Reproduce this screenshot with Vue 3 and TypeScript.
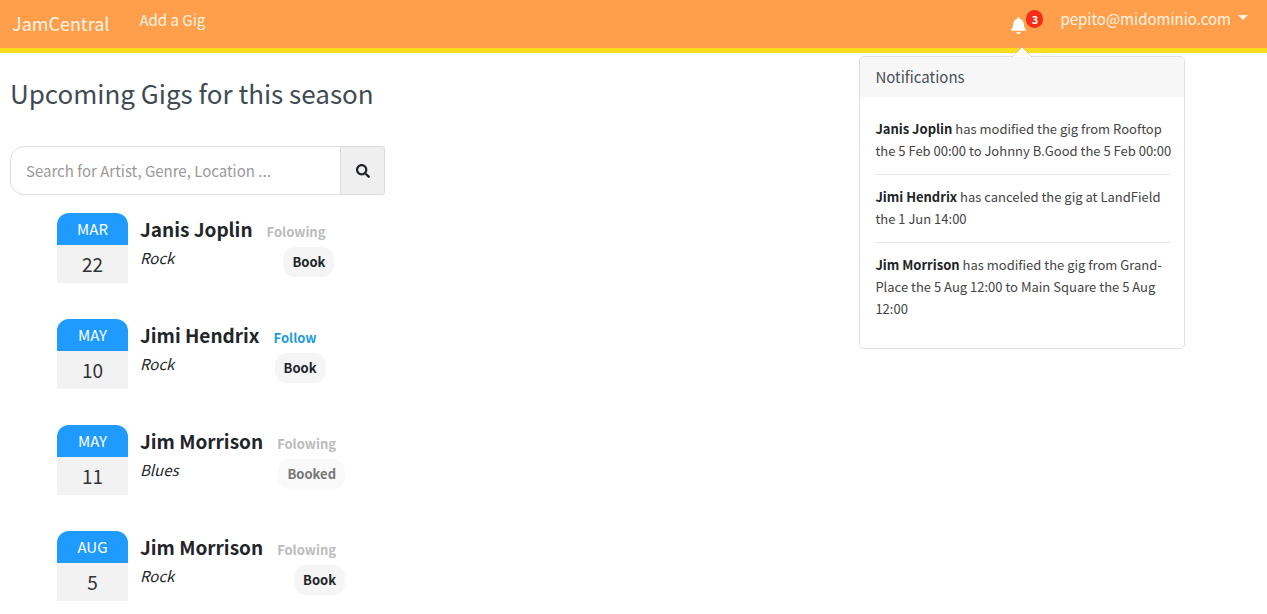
<script setup lang="ts">
import { ref } from 'vue'

interface Gig {
  id: number
  month: string
  day: number
  artist: string
  genre: string
  following: boolean
  booked: boolean
}

interface Notice {
  id: number
  artist: string
  message: string
}

const query = ref('')

const gigs = ref<Gig[]>([
  { id: 1, month: 'MAR', day: 22, artist: 'Janis Joplin', genre: 'Rock', following: true, booked: false },
  { id: 2, month: 'MAY', day: 10, artist: 'Jimi Hendrix', genre: 'Rock', following: false, booked: false },
  { id: 3, month: 'MAY', day: 11, artist: 'Jim Morrison', genre: 'Blues', following: true, booked: true },
  { id: 4, month: 'AUG', day: 5, artist: 'Jim Morrison', genre: 'Rock', following: true, booked: false },
])

const notices: Notice[] = [
  { id: 1, artist: 'Janis Joplin', message: 'has modified the gig from Rooftop the 5 Feb 00:00 to Johnny B.Good the 5 Feb 00:00' },
  { id: 2, artist: 'Jimi Hendrix', message: 'has canceled the gig at LandField the 1 Jun 14:00' },
  { id: 3, artist: 'Jim Morrison', message: 'has modified the gig from Grand-Place the 5 Aug 12:00 to Main Square the 5 Aug 12:00' },
]

const open = ref(true)
</script>

<template>
  <div class="page">
    <header class="navbar">
      <a class="brand" href="#">JamCentral</a>
      <nav class="links"><a class="link" href="#">Add a Gig</a></nav>
      <div class="alerts">
        <button class="bell" type="button" aria-label="Notifications" :aria-expanded="open" @click="open = !open">
          <svg class="bell-icon" viewBox="0 0 448 512" aria-hidden="true">
            <path fill="currentColor" d="M224 512c35.320 0 63.970-28.650 63.970-64H160.030c0 35.350 28.650 64 63.970 64zm215.390-149.710c-19.320-20.760-55.470-51.990-55.470-154.290 0-77.700-54.480-139.900-127.940-155.160V32c0-17.670-14.320-32-31.980-32s-31.980 14.330-31.980 32v20.840C118.560 68.100 64.080 130.300 64.080 208c0 102.300-36.150 133.530-55.470 154.290-6 6.450-8.660 14.160-8.610 21.710.11 16.400 12.980 32 32.100 32h383.800c19.120 0 32-15.600 32.100-32 .05-7.550-2.610-15.270-8.610-21.710z" />
          </svg>
          <span class="badge">3</span>
        </button>
        <section v-if="open" class="popover" aria-label="Notifications list">
          <svg class="arrow" viewBox="0 0 20 10" aria-hidden="true">
            <path d="M0 10 L10 0 L20 10Z" fill="#ffffff" />
            <path d="M0 10 L10 0 L20 10" fill="none" stroke="#00000026" />
          </svg>
          <h2 class="popover-title">Notifications</h2>
          <ul class="notices">
            <li v-for="n in notices" :key="n.id" class="notice">
              <p class="notice-text"><strong>{{ n.artist }}</strong> <span>{{ n.message }}</span></p>
            </li>
          </ul>
        </section>
      </div>
      <button class="account" type="button">pepito@midominio.com<span class="caret"></span></button>
    </header>

    <main class="content">
      <h1 class="title">Upcoming Gigs for this season</h1>
      <form class="search" role="search" @submit.prevent>
        <input v-model="query" class="search-input" type="text" aria-label="Search gigs" placeholder="Search for Artist, Genre, Location ..." />
        <button class="search-button" type="submit" aria-label="Search">
          <svg class="search-icon" viewBox="0 0 512 512" aria-hidden="true">
            <path fill="currentColor" d="M505 442.700L405.300 343c-4.500-4.500-10.600-7-17-7H372c27.600-35.300 44-79.700 44-128C416 93.100 322.900 0 208 0S0 93.100 0 208s93.100 208 208 208c48.300 0 92.700-16.400 128-44v16.300c0 6.400 2.500 12.500 7 17l99.700 99.700c9.400 9.400 24.600 9.400 33.900 0l28.300-28.300c9.400-9.400 9.400-24.600.1-34zM208 336c-70.700 0-128-57.200-128-128 0-70.700 57.200-128 128-128 70.700 0 128 57.200 128 128 0 70.700-57.200 128-128 128z" />
          </svg>
        </button>
      </form>

      <ul class="gigs">
        <li v-for="gig in gigs" :key="gig.id" class="gig">
          <div class="date">
            <span class="month">{{ gig.month }}</span>
            <span class="day">{{ gig.day }}</span>
          </div>
          <div class="details">
            <div class="line heading">
              <span class="artist">{{ gig.artist }}</span>
              <button class="follow" :class="{ following: gig.following }" type="button" @click="gig.following = !gig.following">{{ gig.following ? 'Folowing' : 'Follow' }}</button>
            </div>
            <div class="line">
              <span class="genre">{{ gig.genre }}</span>
              <button class="book" type="button" :disabled="gig.booked">{{ gig.booked ? 'Booked' : 'Book' }}</button>
            </div>
          </div>
        </li>
      </ul>
    </main>
  </div>
</template>

<style>
body {
  margin: 0;
  background: #ffffff;
  overflow: hidden;
}
</style>

<style scoped>
.page,
.page button,
.page input {
  font-family: "Noto Sans CJK SC", "Noto Sans", sans-serif;
}

.page {
  color: #212529;
}

button {
  margin: 0;
  padding: 0;
  border: 0;
  background: none;
  cursor: pointer;
}

ul {
  margin: 0;
  padding: 0;
  list-style: none;
}

.navbar {
  display: flex;
  align-items: flex-start;
  box-sizing: border-box;
  height: 53px;
  padding: 8px 19px 0 12px;
  background: #ff9f4b;
  border-bottom: 5px solid #f9dd1c;
}

.brand,
.link,
.account {
  color: #fff5e6;
  text-decoration: none;
  white-space: nowrap;
}

.brand {
  font-size: 18px;
  line-height: 30px;
}

.links {
  flex: 1;
  margin-left: 30px;
  line-height: 22px;
}

.link,
.account {
  font-size: 15px;
  line-height: 22px;
}

.alerts {
  position: relative;
  margin-right: 17px;
}

.bell {
  display: flex;
  color: #ffffff;
}

.bell-icon {
  width: 15px;
  height: 17px;
  margin-top: 9px;
}

.badge {
  width: 17px;
  height: 18px;
  margin-top: 2px;
  border-radius: 9px;
  background: #f72c16;
  color: #ffffff;
  font-size: 11px;
  font-weight: 700;
  line-height: 18px;
  text-align: center;
}

.account {
  display: flex;
  align-items: center;
  gap: 7px;
}

.caret {
  margin-bottom: 4px;
  border: 5px solid transparent;
  border-top-color: currentColor;
  border-bottom: 0;
}

.popover {
  position: absolute;
  z-index: 1;
  top: 48px;
  left: 50%;
  box-sizing: border-box;
  width: 326px;
  margin-left: -168px;
  border: 1px solid #dfdfdf;
  border-radius: 5px;
  background: #ffffff;
}

.arrow {
  position: absolute;
  bottom: 100%;
  left: 50%;
  width: 20px;
  height: 10px;
  transform: translateX(-50%);
}

.popover-title {
  margin: 0;
  padding: 8px 15px;
  border-radius: 4px 4px 0 0;
  background: #f7f7f7;
  color: #495057;
  font-size: 15px;
  font-weight: 400;
  line-height: 24px;
}

.notices {
  padding: 21px 14px 28px 15px;
}

.notice {
  padding-bottom: 12px;
}

.notice + .notice {
  padding-top: 11px;
  border-top: 1px solid #e9e9e9;
}

.notice:last-child {
  padding-bottom: 0;
}

.notice-text {
  margin: 0 -8px 0 0;
  color: #444444;
  font-size: 13px;
  line-height: 22px;
}

.notice strong {
  color: #212529;
}

.content {
  padding: 20px 11px 0 10px;
}

.title {
  margin: 0 0 33px;
  color: #3f4b53;
  font-size: 26px;
  font-weight: 400;
  line-height: 40px;
}

.search {
  display: flex;
  box-sizing: border-box;
  max-width: 375px;
  height: 49px;
}

.search-input {
  flex: 1;
  min-width: 0;
  padding: 0 15px;
  border: 1px solid #dcdcdc;
  border-radius: 14px 0 0 14px;
  background: #ffffff;
  color: #212529;
  font-size: 15px;
}

.search-input::placeholder {
  color: #999999;
  opacity: 1;
}

.search-button {
  display: flex;
  align-items: center;
  justify-content: center;
  width: 44px;
  border: 1px solid #dcdcdc;
  border-left: 0;
  border-radius: 0 4px 4px 0;
  background: #efefef;
  color: #212529;
}

.search-icon {
  width: 14px;
  height: 14px;
}

.gigs {
  padding: 18px 0 0 47px;
}

.gig {
  display: flex;
  align-items: flex-start;
  gap: 12px;
  margin-bottom: 35px;
}

.date {
  width: 71px;
  overflow: hidden;
  border-radius: 12px 12px 0 0;
  background: #f2f2f2;
  text-align: center;
}

.month,
.day {
  display: block;
}

.month {
  background: #1f9bff;
  color: #ffffff;
  font-size: 15px;
  line-height: 32px;
}

.day {
  color: #333333;
  font-size: 19px;
  line-height: 38px;
}

.details {
  min-height: 71px;
}

.line {
  display: flex;
  justify-content: space-between;
  align-items: flex-start;
}

.heading {
  align-items: baseline;
  height: 34px;
}

.artist {
  font-size: 19px;
  font-weight: 700;
  line-height: 32px;
}

.genre {
  font-size: 15px;
  font-style: italic;
  line-height: 22px;
}

.follow,
.book {
  font-size: 13px;
  font-weight: 700;
}

.follow {
  margin-left: 14px;
  padding-right: 9px;
  color: #1f9bdc;
  line-height: 22px;
}

.follow.following {
  color: #bbbbbb;
}

.book {
  padding: 0 9px;
  border-radius: 12px;
  background: #f5f5f5;
  color: #212529;
  line-height: 30px;
}

.book:disabled {
  background: #f9f9f9;
  color: #777777;
}
</style>
